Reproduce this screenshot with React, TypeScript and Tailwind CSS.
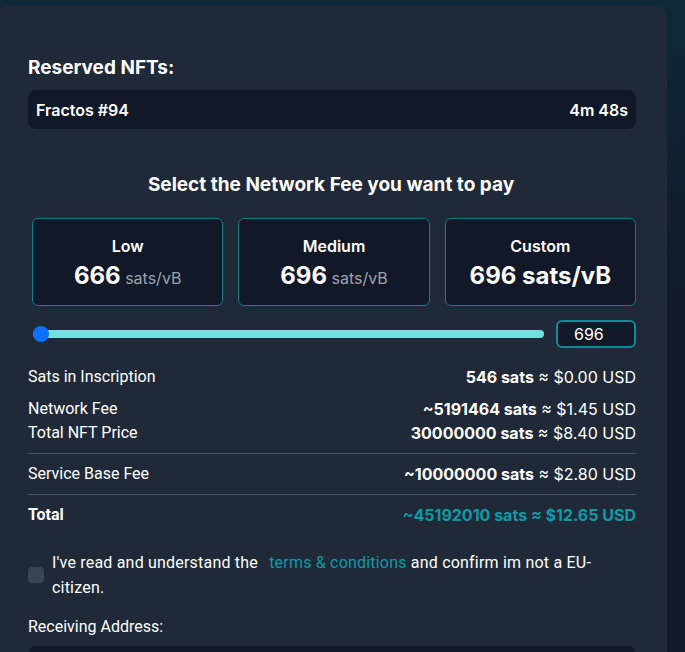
import React from "react";

const inter = { fontFamily: "Inter, 'Noto Sans', sans-serif" };

function Row({ label, bold, rest, className = "" }: { label: string; bold: string; rest: string; className?: string }) {
  return (
    <div className={"flex justify-between items-center h-6 " + className}>
      <span>{label}</span>
      <span style={inter}>
        <span className="font-bold">{bold}</span>
        {rest}
      </span>
    </div>
  );
}

function FeeCard({ title, value, unit, custom }: { title: string; value: string; unit: string; custom?: boolean }) {
  return (
    <div className="h-[88px] rounded-md border border-[#0e7f8c] bg-[#111827] flex flex-col items-center justify-center">
      <div className="text-base font-semibold leading-6 mt-[3px]">{title}</div>
      <div className="leading-8 mt-[2px]">
        <span className="text-2xl font-bold">{value}</span>
        {custom ? (
          <span className="text-2xl font-bold"> {unit}</span>
        ) : (
          <span className="text-base text-[#9ca3af]"> {unit}</span>
        )}
      </div>
    </div>
  );
}

export default function App() {
  return (
    <div
      className="w-[685px] h-[652px] overflow-hidden bg-gradient-to-b from-[#0d2a36] via-[#111827] to-[#111827] text-white"
      style={inter}
    >
      <div className="ml-[-4px] mt-[6px] w-[671px] h-[700px] rounded-xl bg-[#1f2937] pl-8 pr-[31px] pt-[48px]">
        <div className="text-[19px] font-bold leading-7">Reserved NFTs:</div>
        <div className="mt-[8px] h-[39px] rounded-lg bg-[#111827] flex items-center justify-between px-2 font-semibold text-base">
          <span>Fractos #94</span>
          <span>4m 48s</span>
        </div>
        <div className="mt-[42px] text-[19px] font-bold leading-7 text-center pr-[2px]">
          Select the Network Fee you want to pay
        </div>
        <div className="mt-[19px] ml-1 grid grid-cols-3 gap-[15px]">
          <FeeCard title="Low" value="666" unit="sats/vB" />
          <FeeCard title="Medium" value="696" unit="sats/vB" />
          <FeeCard title="Custom" value="696" unit="sats/vB" custom />
        </div>
        <div className="mt-[14px] flex items-center gap-3">
          <div className="relative flex-1 ml-[5px] h-2 rounded-full bg-[#73e0e4]">
            <div className="absolute left-0 top-1/2 -translate-y-1/2 w-4 h-4 rounded-full bg-[#0a72ff]" />
          </div>
          <div className="w-[80px] h-[28px] rounded-md border-2 border-[#0e8b99] bg-[#111827] flex items-center pl-4 text-base">
            696
          </div>
        </div>
        <div className="mt-[17px] text-base" style={{ fontFamily: "Roboto, 'Noto Sans', sans-serif" }}>
          <Row label="Sats in Inscription" bold="546 sats" rest=" ≈ $0.00 USD" className="mb-2" />
          <Row label="Network Fee" bold="~5191464 sats" rest=" ≈ $1.45 USD" />
          <Row label="Total NFT Price" bold="30000000 sats" rest=" ≈ $8.40 USD" />
          <div className="my-2 h-px bg-[#4b5563]" />
          <Row label="Service Base Fee" bold="~10000000 sats" rest=" ≈ $2.80 USD" />
          <div className="my-2 h-px bg-[#4b5563]" />
          <div className="flex justify-between items-center h-6 font-bold">
            <span>Total</span>
            <span className="text-[#0e9aa6]" style={inter}>~45192010 sats ≈ $12.65 USD</span>
          </div>
          <div className="mt-[23px] flex items-center gap-2">
            <div className="w-4 h-4 shrink-0 rounded bg-[#3b4452]" />
            <div className="leading-[25px] pr-5 tracking-[0.2px]">
              I've read and understand the{" "}
              <span className="text-[#0e9aa6] ml-[7px]">terms &amp; conditions</span> and confirm im not a EU-citizen.
            </div>
          </div>
          <div className="mt-[15px] leading-6">Receiving Address:</div>
          <div className="mt-[7px] h-10 rounded-lg bg-[#111827]" />
        </div>
      </div>
    </div>
  );
}
